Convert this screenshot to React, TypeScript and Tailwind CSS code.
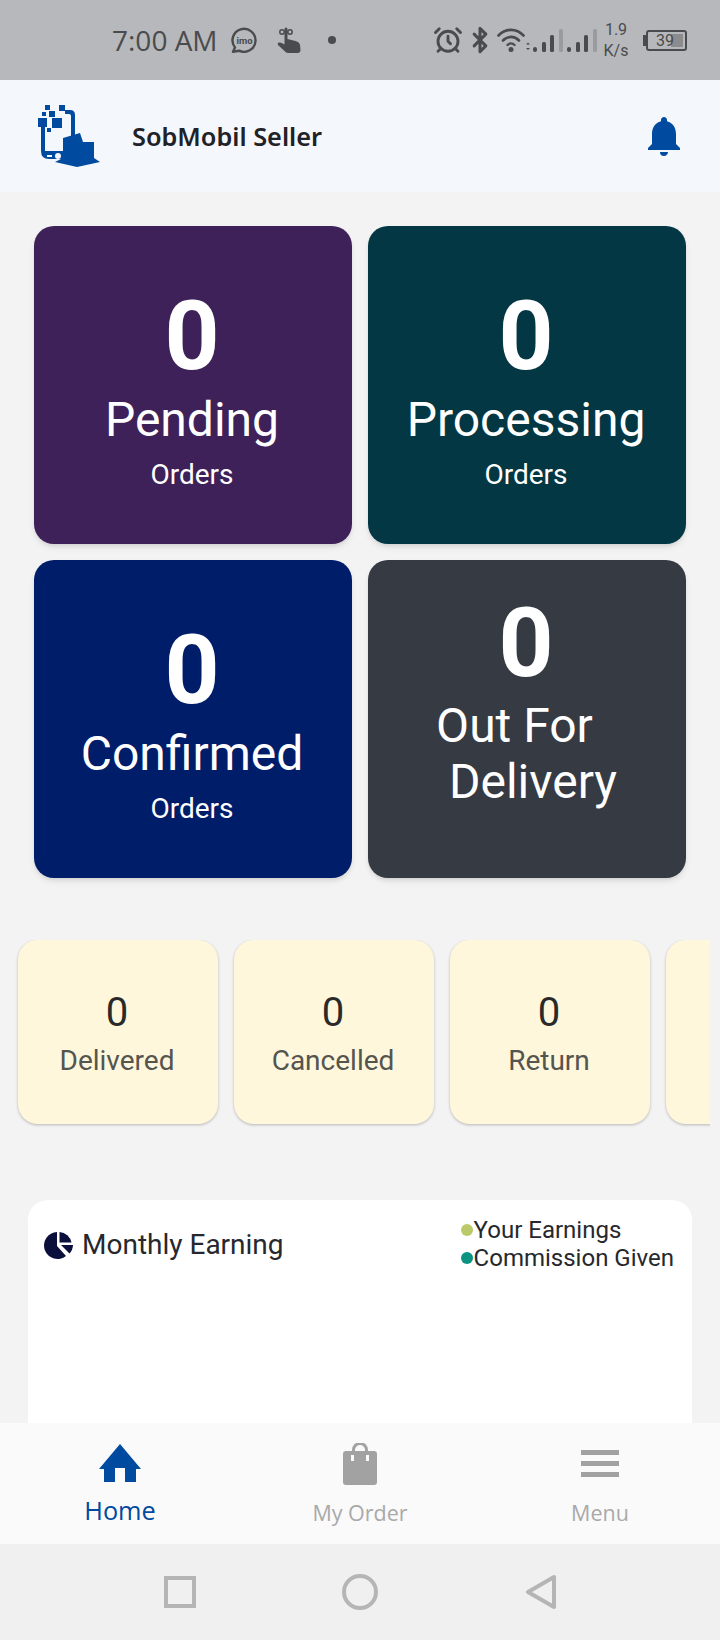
import React from "react";
import { MdNotifications } from "react-icons/md";
import { AlarmClock, Bluetooth } from "lucide-react";

const orderCards = [
    { count: "0", title: "Pending", color: "bg-[#3e2159]" },
    { count: "0", title: "Processing", color: "bg-[#033743]" },
    { count: "0", title: "Confirmed", color: "bg-[#001d6a]" },
];

const smallCards = ["Delivered", "Cancelled", "Return", ""];

const SignalBars = () => (
    <svg width="30" height="24" viewBox="0 0 30 24" className="fill-[#4a4b4d]">
        <rect x="0" y="18" width="4" height="5" rx="2" />
        <rect x="9" y="13" width="4" height="10" rx="1.500" />
        <rect x="17" y="6" width="4" height="17" rx="1.500" />
        <rect x="26" y="0" width="4" height="23" rx="1.500" className="fill-[#9a9b9e]" />
    </svg>
);

const WifiIcon = () => (
    <svg width="34" height="26" viewBox="0 0 34 26" className="fill-none stroke-[#4a4b4d]">
        <path d="M1.500 8.500c7-7.500 18-7.500 25 0" strokeWidth="2.600" strokeLinecap="round" />
        <path d="M6 13.500c4.500-4.800 11.500-4.800 16 0" strokeWidth="2.600" strokeLinecap="round" />
        <path d="M10.500 18c2-2 5-2 7 0" strokeWidth="2.400" strokeLinecap="round" />
        <circle cx="14" cy="22.500" r="2.500" className="fill-[#4a4b4d] stroke-none" />
        <path d="M31 15.500l-2 2h4zM31 23l-2-2h4z" className="fill-[#4a4b4d] stroke-none" />
    </svg>
);

const ImoIcon = () => (
    <svg width="26" height="26" viewBox="0 0 26 26" className="fill-none stroke-[#4a4b4d]">
        <path d="M4 20.500a11.500 11.500 0 1 1 4 3.200l-6 1z" strokeWidth="2.400" strokeLinejoin="round" />
        <text x="13.500" y="16.500" textAnchor="middle" className="fill-[#4a4b4d] stroke-none text-[9.500px] font-bold">imo</text>
    </svg>
);

const TouchIcon = () => (
    <svg width="24" height="26" viewBox="0 0 24 26" className="fill-[#4a4b4d]">
        <circle cx="5" cy="5" r="2.200" className="fill-none stroke-[#4a4b4d]" strokeWidth="1.500" />
        <circle cx="13" cy="5" r="2.200" className="fill-none stroke-[#4a4b4d]" strokeWidth="1.500" />
        <path d="M7.500 2a1.500 1.500 0 0 1 3 0v10l8 2q4 1 4.500 4l.5 5q0 3-3 3H11q-2 0-3.500-2L1 18q-1-2 1-2.500 2-.5 5.500 2z" />
    </svg>
);

const PieIcon = () => (
    <svg width="30" height="28" viewBox="0 0 30 28" className="fill-[#0a0f3c]">
        <path d="M13 1v14l9 10a13.500 13.500 0 1 1-9-24z" />
        <path d="M15.500 1a13 13 0 0 1 12 10.500h-12z" />
        <path d="M17 14h12a13 13 0 0 1-3.500 8.500z" />
    </svg>
);

const Logo = () => (
    <svg width="64" height="62" viewBox="0 0 64 62" className="fill-[#004a9f]">
        <rect x="7" y="0" width="5" height="5" />
        <rect x="4" y="7" width="4" height="4" />
        <rect x="11" y="6" width="6" height="6" />
        <rect x="21" y="0" width="6" height="6" />
        <rect x="0" y="13" width="9" height="9" />
        <rect x="14" y="13" width="10" height="10" />
        <rect x="9" y="23" width="4" height="4" />
        <path d="M27 5h5q5 0 5 5v24h-4V11q0-2-2-2h-4zM3 22h4v24h26v8H11q-8 0-8-8z" />
        <circle cx="20" cy="51" r="3" className="fill-[#f4f7fc]" />
        <rect x="9" y="50" width="5" height="2" className="fill-[#f4f7fc]" />
        <path d="M25 33l17-5 3 9h11v16l6 4-23 5-22-5 8-4z" />
    </svg>
);

const App = () => {
    return (
        <div className="w-[720px] h-[1640px] flex flex-col overflow-hidden bg-[#f3f3f4] font-['Roboto',sans-serif]">
            <div className="h-[80px] shrink-0 flex items-center pl-[112px] pr-[33px] bg-[#b7b8bb] text-[#4a4b4d]">
                <span className="text-[28px] leading-none font-['Open_Sans',sans-serif]">7:00 AM</span>
                <div className="ml-[13px] flex"><ImoIcon /></div>
                <div className="ml-[20px] flex"><TouchIcon /></div>
                <div className="ml-[27px] w-[8px] h-[8px] rounded-full bg-[#4a4b4d]" />
                <div className="ml-auto flex items-center">
                    <AlarmClock size={30} strokeWidth={2.300} />
                    <Bluetooth size={28} strokeWidth={2.600} className="ml-[3px]" />
                    <div className="ml-[3px] flex"><WifiIcon /></div>
                    <div className="ml-[2px] flex items-center gap-[4px] pt-[2px]">
                        <SignalBars />
                        <SignalBars />
                    </div>
                    <div className="ml-[5px] w-[28px] text-center text-[16px] leading-[21px]">
                        <div>1.9</div>
                        <div>K/s</div>
                    </div>
                    <div className="ml-[13px] flex items-center">
                        <div className="w-[3px] h-[11px] bg-[#4a4b4d]" />
                        <div className="relative w-[41px] h-[21px] rounded-[3px] border-2 border-[#4a4b4d] text-[16px] leading-[18px] pl-[8px]">
                            <div className="absolute right-[2px] top-[2px] bottom-[2px] w-[12px] bg-[#8b8c8e]" />
                            <span className="relative">39</span>
                        </div>
                    </div>
                </div>
            </div>

            <div className="h-[112px] shrink-0 flex items-center bg-[#f4f7fc] pl-[38px] pr-[37px]">
                <Logo />
                <p className="ml-[30px] pt-[2px] text-[25.300px] font-semibold text-[#1f2227] font-['Noto_Sans',sans-serif]">SobMobil Seller</p>
                <MdNotifications size={48} className="ml-auto text-[#004a9f] -mr-[5px]" />
            </div>

            <div className="flex-1 min-h-0 overflow-hidden">
                <div className="grid grid-cols-2 gap-4 px-[34px] pt-[34px]">
                    {orderCards.map((card) => (
                        <div key={card.title} className={`h-[318px] rounded-[20px] shadow-md flex flex-col items-center pt-[62px] pr-[2px] text-white ${card.color}`}>
                            <p className="text-[96px] leading-[96px] font-bold">{card.count}</p>
                            <p className="text-[48px] leading-[56px] mt-[8px]">{card.title}</p>
                            <p className="text-[28px] leading-[32px] mt-[11px]">Orders</p>
                        </div>
                    ))}
                    <div className="h-[318px] rounded-[20px] shadow-md flex flex-col items-center pt-[35px] pr-[2px] text-white bg-[#363a42]">
                        <p className="text-[96px] leading-[96px] font-bold">0</p>
                        <p className="text-[48px] leading-[56px] mt-[7px] pr-[23px]">Out For</p>
                        <p className="text-[48px] leading-[56px] pl-[14px]">Delivery</p>
                    </div>
                </div>

                <div className="flex gap-4 pl-[18px] mr-[10px] mt-[62px] pb-[4px] overflow-hidden">
                    {smallCards.map((label, index) => (
                        <div key={index} className="w-[200px] h-[184px] shrink-0 rounded-[20px] bg-[#fff7dc] shadow-[0_1px_3px_rgba(0,0,0,0.25)] flex flex-col items-center pt-[50px] pr-[2px]">
                            {label && (
                                <>
                                    <p className="text-[40px] leading-[46px] text-[#2a2a2a]">0</p>
                                    <p className="text-[28px] leading-[32px] mt-[9px] text-[#555550]">{label}</p>
                                </>
                            )}
                        </div>
                    ))}
                </div>

                <div className="mx-[28px] mt-[72px] h-[300px] rounded-[20px] bg-white flex justify-between pl-[16px] pr-[18px] pt-[16px]">
                    <div className="flex items-center gap-[8px] h-[58px] self-start">
                        <PieIcon />
                        <span className="text-[28px] text-[#26282d]">Monthly Earning</span>
                    </div>
                    <div className="text-[24px] leading-[28px] text-[#26282d]">
                        <div className="flex items-center">
                            <div className="w-[12px] h-[12px] rounded-full bg-[#bcc96b] ml-[1px] mr-[1px]" />
                            <span>Your Earnings</span>
                        </div>
                        <div className="flex items-center">
                            <div className="w-[12px] h-[12px] rounded-full bg-[#0a9381] ml-[1px] mr-[1px]" />
                            <span>Commission Given</span>
                        </div>
                    </div>
                </div>
            </div>

            <div className="h-[121px] shrink-0 grid grid-cols-3 bg-[#fafafa] font-['Open_Sans',sans-serif]">
                <div className="flex flex-col items-center pt-[21px]">
                    <svg width="42" height="38" viewBox="0 0 42 38" className="fill-[#004a9f]">
                        <path d="M21 0l21 25h-5v13H26V24h-10v14H5V25H0z" />
                    </svg>
                    <span className="text-[25.300px] leading-[34px] mt-[11px] text-[#004a9f]">Home</span>
                </div>
                <div className="flex flex-col items-center pt-[20px]">
                    <svg width="34" height="42" viewBox="0 0 34 42" className="fill-[#a2a2a2]">
                        <path d="M9 8V7a8 8 0 0 1 16 0v1h6q3 0 3 3v28q0 3-3 3H3q-3 0-3-3V11q0-3 3-3zm3 0h10V7a5 5 0 0 0-10 0z" />
                        <rect x="8" y="12" width="3" height="6" className="fill-[#fafafa]" />
                        <rect x="23" y="12" width="3" height="6" className="fill-[#fafafa]" />
                    </svg>
                    <span className="text-[21.500px] leading-[30px] mt-[13px] text-[#a9a9a9]">My Order</span>
                </div>
                <div className="flex flex-col items-center pt-[27px]">
                    <div className="w-[38px] flex flex-col gap-[6px]">
                        <div className="h-[5px] bg-[#a2a2a2]" />
                        <div className="h-[5px] bg-[#a2a2a2]" />
                        <div className="h-[5px] bg-[#a2a2a2]" />
                    </div>
                    <span className="text-[21.500px] leading-[30px] mt-[21px] text-[#a9a9a9]">Menu</span>
                </div>
            </div>

            <div className="h-[96px] shrink-0 flex items-center justify-center bg-[#f0f0f0]">
                <div className="w-[32px] h-[32px] border-[4px] border-[#b5b5b5]" />
                <div className="ml-[146px] w-[36px] h-[36px] rounded-full border-[4px] border-[#b5b5b5]" />
                <svg width="32" height="36" viewBox="0 0 32 36" className="ml-[147px] fill-none stroke-[#b5b5b5]">
                    <path d="M29 3v30L3 18z" strokeWidth="4" strokeLinejoin="round" />
                </svg>
            </div>
        </div>
    );
};

export default App;
